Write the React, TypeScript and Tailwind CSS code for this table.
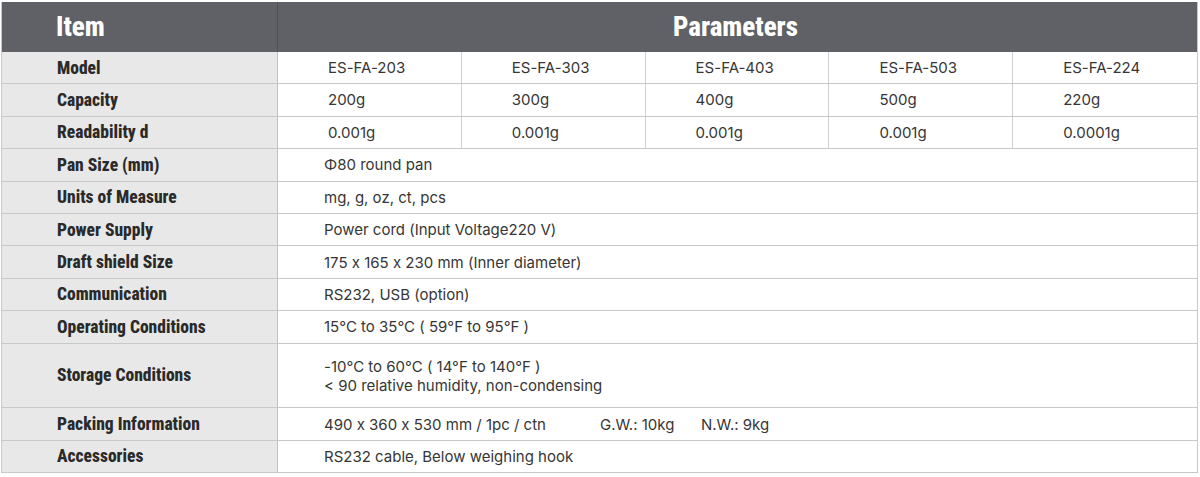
import React from "react";

const labelFont = "font-['Roboto_Condensed','Liberation_Sans_Narrow','DejaVu_Sans_Condensed',Roboto,sans-serif]";
const valueFont = "font-['Inter',sans-serif] [font-feature-settings:'calt'_0]";

type Row = { label: string; values?: string[]; full?: React.ReactNode; tall?: boolean };

const rows: Row[] = [
  { label: "Model", values: ["ES-FA-203", "ES-FA-303", "ES-FA-403", "ES-FA-503", "ES-FA-224"] },
  { label: "Capacity", values: ["200g", "300g", "400g", "500g", "220g"] },
  { label: "Readability d", values: ["0.001g", "0.001g", "0.001g", "0.001g", "0.0001g"] },
  { label: "Pan Size (mm)", full: "Φ80 round pan" },
  { label: "Units of Measure", full: "mg, g, oz, ct, pcs" },
  { label: "Power Supply", full: "Power cord (Input Voltage220 V)" },
  { label: "Draft shield Size", full: "175 x 165 x 230 mm (Inner diameter)" },
  { label: "Communication", full: "RS232, USB (option)" },
  { label: "Operating Conditions", full: "15°C to 35°C ( 59°F to 95°F )" },
  {
    label: "Storage Conditions",
    tall: true,
    full: (
      <>
        <div>-10°C to 60°C ( 14°F to 140°F )</div>
        <div>&lt; 90 relative humidity, non-condensing</div>
      </>
    ),
  },
  {
    label: "Packing Information",
    full: (
      <span className="flex">
        <span className="w-[276px]">490 x 360 x 530 mm / 1pc / ctn</span>
        <span className="w-[101px]">G.W.: 10kg</span>
        <span>N.W.: 9kg</span>
      </span>
    ),
  },
  { label: "Accessories", full: "RS232 cable, Below weighing hook" },
];

export default function App() {
  return (
    <div className="w-[1200px] h-[477px] bg-white pt-[2px] pl-[1px]">
      <div className="w-[1197px] border-l border-r border-[#c8c8c8]">
        <div className="flex h-[50px] bg-[#5f6166] text-white">
          <div className={`w-[276px] border-r border-[#4f5155] flex items-center pl-[54px] text-[27px] font-extrabold ${labelFont}`}>
            Item
          </div>
          <div className={`flex-1 flex items-center justify-center pr-[4px] text-[27px] font-extrabold ${labelFont}`}>
            Parameters
          </div>
        </div>
        {rows.map((r, i) => (
          <div
            key={i}
            className={`flex border-b border-[#c8c8c8] ${r.tall ? "h-[64.8px]" : "h-[32.4px]"}`}
          >
            <div
              className={`w-[276px] shrink-0 bg-[#e8e8e8] border-r border-[#c0c0c0] flex items-center pl-[55px] text-[17.5px] font-extrabold text-[#2a2a2a] ${labelFont}`}
            >
              {r.label}
            </div>
            {r.values ? (
              <div className="flex-1 grid grid-cols-5">
                {r.values.map((v, j) => (
                  <div
                    key={j}
                    className={`flex items-center pl-[50px] pt-px text-[15px] text-[#363636] ${valueFont} ${j < 4 ? "border-r border-[#d0d0d0]" : ""}`}
                  >
                    {v}
                  </div>
                ))}
              </div>
            ) : (
              <div
                className={`flex-1 pl-[46px] text-[15px] text-[#363636] ${valueFont} ${r.tall ? "pt-[13px] leading-[19px]" : "flex items-center pt-px leading-[20px]"}`}
              >
                {r.full}
              </div>
            )}
          </div>
        ))}
      </div>
    </div>
  );
}
